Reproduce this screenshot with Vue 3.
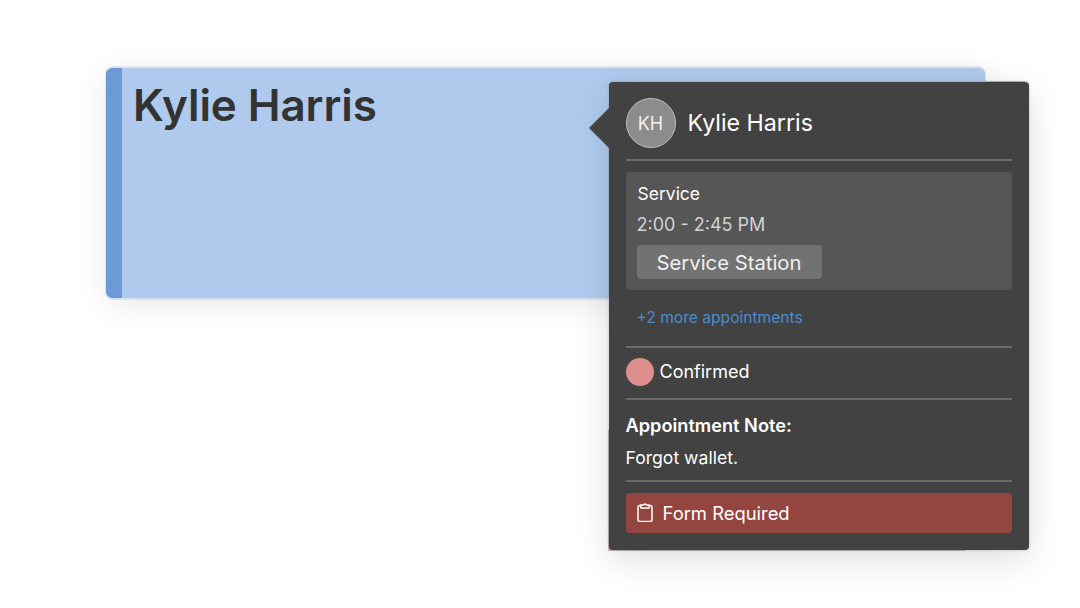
<script setup>
const name = 'Kylie Harris'
</script>

<template>
  <div class="page">
    <div class="card">
      <div class="stripe"></div>
      <h1 class="title">{{ name }}</h1>
    </div>
    <div class="under under-low"></div>
    <div class="under under-top"></div>
    <aside class="pop">
      <span class="arrow"></span>
      <header class="head">
        <div class="avatar">KH</div>
        <div class="pname">{{ name }}</div>
      </header>
      <section class="service">
        <div class="svc">Service</div>
        <div class="time">2:00 - 2:45 PM</div>
        <div class="chip">Service Station</div>
      </section>
      <div class="more">+2 more appointments</div>
      <div class="status">
        <span class="dot"></span>
        <span class="stext">Confirmed</span>
      </div>
      <div class="note">
        <div class="nlabel">Appointment Note:</div>
        <div class="ntext">Forgot wallet.</div>
      </div>
      <div class="form">
        <svg class="clip" width="16" height="20" viewBox="0 0 16 20" fill="none" stroke="#fff" stroke-width="1.5" stroke-linejoin="round">
          <path d="M3.8 3.6H2.6A1.6 1.6 0 0 0 1 5.2v12.6a1.6 1.6 0 0 0 1.6 1.6h10.8a1.6 1.6 0 0 0 1.6-1.6V5.2a1.6 1.6 0 0 0-1.6-1.6h-1.2" />
          <path d="M3.8 6V3h2.7a1.6 1.6 0 0 1 3 0h2.7v3z" />
        </svg>
        <span>Form Required</span>
      </div>
    </aside>
  </div>
</template>

<style>
html, body { margin: 0; background: #fff; }
</style>

<style scoped>
.page {
  position: relative;
  width: 1080px;
  height: 608px;
  overflow: hidden;
  background: #fff;
  padding: 67px 0 0 106px;
  box-sizing: border-box;
  font-family: "Inter", "Open Sans", sans-serif;
}
.card {
  width: 879px;
  height: 232px;
  box-sizing: border-box;
  display: flex;
  background: #afcaec;
  border-radius: 7px;
  border-top: 1px solid #d3e1f3;
  border-bottom: 1px solid #d3e1f3;
  overflow: hidden;
  box-shadow: 0 0 0 1px rgba(120, 130, 150, 0.16), 0 6px 34px rgba(0, 0, 0, 0.09);
}
.stripe {
  width: 16px;
  flex: none;
  background: #6c9ad7;
}
.title {
  margin: 10px 0 0 11px;
  font-size: 44px;
  line-height: 54px;
  font-weight: 600;
  letter-spacing: -0.1px;
  color: #333;
  white-space: nowrap;
}
.under {
  position: absolute;
  background: #cdbdba;
}
.under-low {
  left: 608px;
  top: 430px;
  width: 358px;
  height: 121px;
}
.under-top {
  left: 985px;
  top: 81px;
  width: 40px;
  height: 2px;
}
.pop {
  position: absolute;
  left: 609px;
  top: 82px;
  width: 420px;
  height: 468px;
  box-sizing: border-box;
  padding: 16px 17px 0 16.5px;
  background: #424242;
  border-radius: 4px;
  color: #fff;
  box-shadow: 0 10px 36px rgba(0, 0, 0, 0.13), 0 0 3px rgba(0, 0, 0, 0.22);
}
.arrow {
  position: absolute;
  left: -20px;
  top: 26px;
  width: 0;
  height: 0;
  border-top: 20px solid transparent;
  border-bottom: 20px solid transparent;
  border-right: 20px solid #424242;
}
.head {
  display: flex;
  align-items: center;
  gap: 12px;
  height: 50px;
  padding-bottom: 11px;
  border-bottom: 2px solid #6c6c6c;
}
.avatar {
  width: 50px;
  height: 50px;
  box-sizing: border-box;
  border-radius: 50%;
  background: #8c8c8c;
  border: 1px solid #c0c0c0;
  display: flex;
  align-items: center;
  justify-content: center;
  font-size: 18px;
  color: #f2f2f2;
}
.pname {
  font-size: 23.2px;
  line-height: 30px;
  font-weight: 400;
}
.service {
  margin-top: 11px;
  height: 118px;
  box-sizing: border-box;
  padding: 11px 11px 0;
  background: #565656;
  border-radius: 4px;
}
.svc {
  font-size: 17.5px;
  line-height: 22px;
  padding-left: 1px;
}
.time {
  margin-top: 8px;
  font-size: 18px;
  line-height: 24px;
  color: #d2d2d2;
}
.chip {
  margin-top: 8px;
  width: 185px;
  height: 34px;
  border-radius: 4px;
  background: #727272;
  color: #f0f0f0;
  display: flex;
  align-items: center;
  justify-content: center;
  font-size: 20.3px;
}
.more {
  margin-top: 16px;
  height: 40px;
  padding-left: 11px;
  font-size: 15.6px;
  line-height: 24px;
  color: #4a8ccc;
  border-bottom: 2px solid #6c6c6c;
}
.status {
  height: 49px;
  padding-bottom: 1px;
  display: flex;
  align-items: center;
  gap: 6px;
  font-size: 18px;
  border-bottom: 2px solid #6c6c6c;
}
.stext {
  margin-top: -2px;
}
.dot {
  width: 28px;
  height: 28px;
  margin-top: -1px;
  border-radius: 50%;
  background: #dd8f8d;
}
.note {
  height: 82px;
  padding-top: 13px;
  box-sizing: border-box;
  border-bottom: 2px solid #6c6c6c;
}
.nlabel {
  font-size: 18.2px;
  line-height: 24px;
  font-weight: 600;
}
.ntext {
  margin-top: 9px;
  font-size: 17.6px;
  line-height: 24px;
}
.form {
  margin-top: 11px;
  height: 40px;
  border-radius: 4px;
  background: #94453f;
  display: flex;
  align-items: center;
  gap: 10px;
  padding-left: 11px;
  font-size: 18.4px;
}
.clip {
  flex: none;
  margin-top: -2px;
}
</style>
